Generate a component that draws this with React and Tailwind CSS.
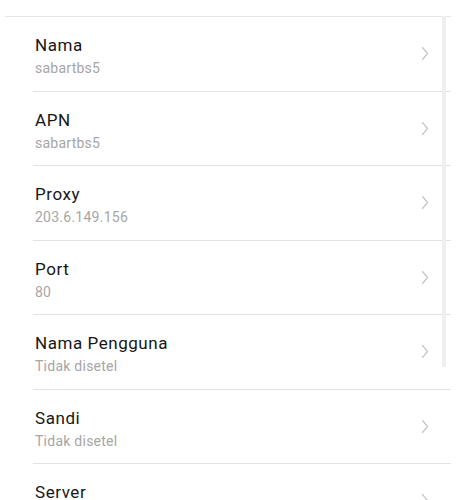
import React from "react";

const items = [
  { t: "Nama", s: "sabartbs5" },
  { t: "APN", s: "sabartbs5" },
  { t: "Proxy", s: "203.6.149.156" },
  { t: "Port", s: "80" },
  { t: "Nama Pengguna", s: "Tidak disetel" },
  { t: "Sandi", s: "Tidak disetel" },
  { t: "Server", s: "Tidak disetel" },
];

function Chevron() {
  return (
    <svg width="8" height="15" viewBox="0 0 8 15" fill="none">
      <polyline points="1.5,1.5 6.5,7.5 1.5,13.5" stroke="#c6c6c6" strokeWidth="1.2" strokeLinecap="round" strokeLinejoin="round" />
    </svg>
  );
}

export default function App() {
  return (
    <div
      className="relative w-[475px] h-[500px] bg-white overflow-hidden"
      style={{ fontFamily: "Roboto, 'Noto Sans', sans-serif" }}
    >
      <div className="pt-4">
        <div className="ml-[5px] w-[446px] h-px bg-[#e6e6e6]" />
        <div className="ml-[33px] mr-[24px]">
          {items.map((it) => (
            <div
              key={it.t}
              className="relative h-[74.5px] border-b border-[#e3e3e3] flex items-start"
            >
              <div className="pl-[2px] pt-[18px] flex-1">
                <div className="text-[17px] leading-[20px] tracking-[0.55px] text-[#161616]">{it.t}</div>
                <div className="mt-[4px] text-[14px] leading-[18px] tracking-[0.25px] text-[#a6a6a6]">{it.s}</div>
              </div>
              <div className="self-center mr-[22px] flex items-center">
                <Chevron />
              </div>
            </div>
          ))}
        </div>
      </div>
      <div className="absolute left-[442px] top-[16px] w-[4px] h-[351px] bg-[#efefef]" />
    </div>
  );
}
